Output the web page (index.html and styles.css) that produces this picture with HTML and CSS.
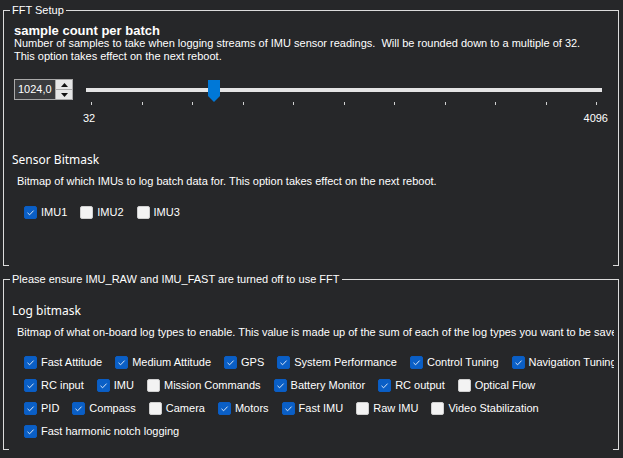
FILE: index.html
```html
<!DOCTYPE html>
<html>
  <head>
    <meta charset="UTF-8">
    <title>FFT Setup</title>
    <link rel="stylesheet" href="styles.css">
  </head>
  <body>
    <fieldset class="group group-fft">
      <legend>FFT Setup</legend>
      <div class="panel">
        <div class="param-title">sample count per batch</div>
        <div class="param-desc">Number of samples to take when logging streams of IMU sensor readings.&nbsp; Will be rounded down to a multiple of 32.<br>This option takes effect on the next reboot.</div>
        <div class="slider-row">
          <div class="numeric">
            <span class="numeric-value">1024,0</span>
            <span class="spin">
              <span class="spin-btn"><svg width="7" height="4" viewBox="0 0 7 4"><path d="M0 4 L3.5 0 L7 4 Z"/></svg></span>
              <span class="spin-btn"><svg width="7" height="4" viewBox="0 0 7 4"><path d="M0 0 L7 0 L3.5 4 Z"/></svg></span>
            </span>
          </div>
          <div class="slider">
            <div class="slider-bar">
              <div class="track"></div>
              <svg class="thumb" style="left: 122px" width="12" height="22" viewBox="0 0 12 22"><path d="M0 0 H12 V16 L6 22 L0 16 Z"/></svg>
            </div>
            <div class="ticks">
              <span></span><span></span><span></span><span></span><span></span><span></span>
              <span></span><span></span><span></span><span></span><span></span>
            </div>
            <div class="scale"><span>32</span><span>4096</span></div>
          </div>
        </div>
        <div class="bitmask-title">Sensor Bitmask</div>
        <div class="bitmask-desc">Bitmap of which IMUs to log batch data for. This option takes effect on the next reboot.</div>
        <div class="checks checks-sensor">
          <div class="check-row">
            <label class="check"><span class="box on"><svg width="13" height="13" viewBox="0 0 13 13"><path d="M3.5 6.8 L5.6 8.8 L9.6 4.6"/></svg></span>IMU1</label>
            <label class="check"><span class="box"></span>IMU2</label>
            <label class="check"><span class="box"></span>IMU3</label>
          </div>
        </div>
      </div>
      <div class="corners"><span></span><span></span></div>
    </fieldset>

    <fieldset class="group group-log">
      <legend>Please ensure IMU_RAW and IMU_FAST are turned off to use FFT</legend>
      <div class="panel">
        <div class="bitmask-title">Log bitmask</div>
        <div class="bitmask-desc">Bitmap of what on-board log types to enable. This value is made up of the sum of each of the log types you want to be saved. It is usually best just to enable all basic log types by setting this to 65535.</div>
        <div class="checks checks-log">
          <div class="check-row">
            <label class="check"><span class="box on"><svg width="13" height="13" viewBox="0 0 13 13"><path d="M3.5 6.8 L5.6 8.8 L9.6 4.6"/></svg></span>Fast Attitude</label>
            <label class="check"><span class="box on"><svg width="13" height="13" viewBox="0 0 13 13"><path d="M3.5 6.8 L5.6 8.8 L9.6 4.6"/></svg></span>Medium Attitude</label>
            <label class="check"><span class="box on"><svg width="13" height="13" viewBox="0 0 13 13"><path d="M3.5 6.8 L5.6 8.8 L9.6 4.6"/></svg></span>GPS</label>
            <label class="check"><span class="box on"><svg width="13" height="13" viewBox="0 0 13 13"><path d="M3.5 6.8 L5.6 8.8 L9.6 4.6"/></svg></span>System Performance</label>
            <label class="check"><span class="box on"><svg width="13" height="13" viewBox="0 0 13 13"><path d="M3.5 6.8 L5.6 8.8 L9.6 4.6"/></svg></span>Control Tuning</label>
            <label class="check"><span class="box on"><svg width="13" height="13" viewBox="0 0 13 13"><path d="M3.5 6.8 L5.6 8.8 L9.6 4.6"/></svg></span>Navigation Tuning</label>
          </div>
          <div class="check-row">
            <label class="check"><span class="box on"><svg width="13" height="13" viewBox="0 0 13 13"><path d="M3.5 6.8 L5.6 8.8 L9.6 4.6"/></svg></span>RC input</label>
            <label class="check"><span class="box on"><svg width="13" height="13" viewBox="0 0 13 13"><path d="M3.5 6.8 L5.6 8.8 L9.6 4.6"/></svg></span>IMU</label>
            <label class="check"><span class="box"></span>Mission Commands</label>
            <label class="check"><span class="box on"><svg width="13" height="13" viewBox="0 0 13 13"><path d="M3.5 6.8 L5.6 8.8 L9.6 4.6"/></svg></span>Battery Monitor</label>
            <label class="check"><span class="box on"><svg width="13" height="13" viewBox="0 0 13 13"><path d="M3.5 6.8 L5.6 8.8 L9.6 4.6"/></svg></span>RC output</label>
            <label class="check"><span class="box"></span>Optical Flow</label>
          </div>
          <div class="check-row">
            <label class="check"><span class="box on"><svg width="13" height="13" viewBox="0 0 13 13"><path d="M3.5 6.8 L5.6 8.8 L9.6 4.6"/></svg></span>PID</label>
            <label class="check"><span class="box on"><svg width="13" height="13" viewBox="0 0 13 13"><path d="M3.5 6.8 L5.6 8.8 L9.6 4.6"/></svg></span>Compass</label>
            <label class="check"><span class="box"></span>Camera</label>
            <label class="check"><span class="box on"><svg width="13" height="13" viewBox="0 0 13 13"><path d="M3.5 6.8 L5.6 8.8 L9.6 4.6"/></svg></span>Motors</label>
            <label class="check"><span class="box on"><svg width="13" height="13" viewBox="0 0 13 13"><path d="M3.5 6.8 L5.6 8.8 L9.6 4.6"/></svg></span>Fast IMU</label>
            <label class="check"><span class="box"></span>Raw IMU</label>
            <label class="check"><span class="box"></span>Video Stabilization</label>
          </div>
          <div class="check-row">
            <label class="check"><span class="box on"><svg width="13" height="13" viewBox="0 0 13 13"><path d="M3.5 6.8 L5.6 8.8 L9.6 4.6"/></svg></span>Fast harmonic notch logging</label>
          </div>
        </div>
      </div>
      <div class="corners"><span></span><span></span></div>
    </fieldset>
  </body>
</html>
```

FILE: styles.css
```css
body {
  margin: 0;
  padding-top: 4px;
  width: 623px;
  height: 458px;
  overflow: hidden;
  box-sizing: border-box;
  background-color: #262729;
  color: #fff;
  font-family: "Liberation Sans", Arial, sans-serif;
  font-size: 11px;
  line-height: 13px;
}
.group {
  margin: 0 4px 0 3px;
  padding: 0;
  min-width: 0;
  border: 1px solid #dcdcdc;
  border-bottom: none;
}
.group legend {
  margin-left: 6px;
  padding: 0 2px;
  line-height: 13px;
}
.group-log {
  margin-top: 7px;
}
.panel {
  margin-right: 4px;
  overflow: hidden;
  white-space: nowrap;
}
.group-fft .panel {
  padding-bottom: 46px;
}
.group-log .panel {
  padding-bottom: 11px;
}
.corners {
  display: flex;
  justify-content: space-between;
  height: 1px;
}
.corners span {
  width: 5px;
  background-color: #dcdcdc;
}

/* numeric parameter */
.param-title {
  margin: 7px 0 0 10px;
  font-size: 13px;
  font-weight: bold;
}
.param-desc {
  margin-left: 10px;
}
.slider-row {
  display: flex;
  align-items: flex-start;
  gap: 13px;
  margin: 16px 0 0 10px;
}
.numeric {
  display: flex;
  width: 59px;
  height: 21px;
  box-sizing: border-box;
  border: 1px solid #a9a9a9;
  background-color: #3a3b3d;
}
.numeric-value {
  flex: 1;
  padding: 3px 0 0 3px;
}
.spin {
  display: flex;
  flex-direction: column;
  width: 16px;
  border-left: 1px solid #a9a9a9;
  background-color: #e6e6e6;
}
.spin-btn {
  flex: 1;
  display: flex;
  align-items: center;
  justify-content: center;
}
.spin-btn:first-child {
  border-bottom: 1px solid #a9a9a9;
}
.spin-btn svg {
  fill: #111;
}
.slider {
  width: 516px;
  margin-top: 1px;
}
.slider-bar {
  position: relative;
  height: 22px;
  padding-top: 8px;
  box-sizing: border-box;
}
.track {
  height: 4px;
  background-color: #e4e4e4;
}
.thumb {
  position: absolute;
  top: 0;
  fill: #0078d7;
}
.ticks {
  display: flex;
  justify-content: space-between;
  height: 3px;
  padding: 0 5px;
}
.ticks span {
  width: 1px;
  background-color: #d2d2d2;
}
.scale {
  display: flex;
  justify-content: space-between;
  margin: 7px -6px 0 -3px;
}

/* bitmask parameter */
.bitmask-title {
  margin: 27px 0 0 8px;
  font-family: "Noto Sans", sans-serif;
  font-size: 12px;
  line-height: 16px;
}
.group-log .bitmask-title {
  margin-top: 17px;
}
.bitmask-desc {
  margin: 7px 0 0 13px;
}
.checks {
  display: flex;
  flex-direction: column;
  gap: 10px;
  margin: 18px 0 0 20px;
}
.checks-log {
  margin-top: 17px;
}
.check-row {
  display: flex;
  gap: 13px;
}
.check {
  display: flex;
  align-items: center;
  gap: 4px;
  height: 13px;
}
.box {
  width: 13px;
  height: 13px;
  box-sizing: border-box;
  border-radius: 2px;
  border: 1px solid #cfcfcf;
  background-color: #f3f3f3;
}
.box.on {
  border-color: #0a5cc2;
  background-color: #0a5fc6;
}
.box svg {
  display: block;
  margin: -1px;
  fill: none;
  stroke: #d8e6f8;
  stroke-width: 1;
}
```
